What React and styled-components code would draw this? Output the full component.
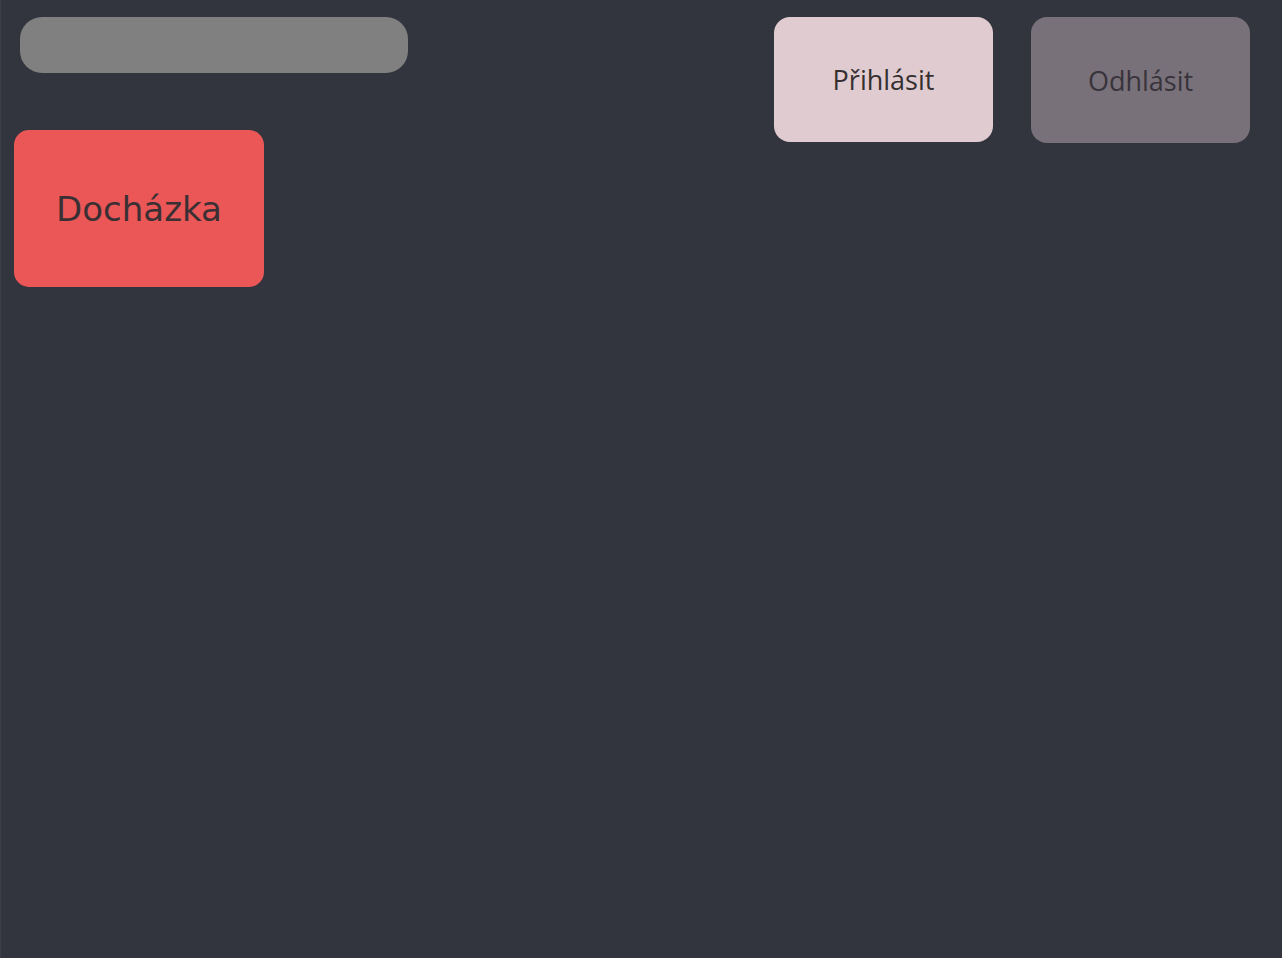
import styled, { createGlobalStyle } from 'styled-components';

const GlobalStyle = createGlobalStyle`
	html, body {
		margin: 0;
		padding: 0;
		background-color: #32343e;
	}

	#root {
		min-height: 100vh;
	}
`;

const App = () => {
	return (
		<>
			<GlobalStyle />
			<Page>
				<LeftColumn>
					<SearchBar />
					<TileButton>Docházka</TileButton>
				</LeftColumn>
				<Actions>
					<ActionButton $variant="login">Přihlásit</ActionButton>
					<ActionButton $variant="logout">Odhlásit</ActionButton>
				</Actions>
			</Page>
		</>
	);
};

export default App;

const Page = styled.div`
	box-sizing: border-box;
	height: 100vh;
	background-color: #32343e;
	border-left: 1px solid #3d3f48;
	display: flex;
	justify-content: space-between;
	align-items: flex-start;
	padding: 17px 32px 0 13px;
`;

const LeftColumn = styled.div`
	display: flex;
	flex-direction: column;
	align-items: flex-start;
	gap: 57px;
`;

const SearchBar = styled.div`
	width: 388px;
	height: 56px;
	margin-left: 6px;
	border-radius: 22px;
	background-color: #808080;
`;

const TileButton = styled.button`
	width: 250px;
	height: 157px;
	border: none;
	border-radius: 15px;
	background-color: #eb5757;
	color: #3a3034;
	font-family: "DejaVu Sans", Verdana, sans-serif;
	font-size: 34px;
	padding: 0;
	cursor: pointer;
`;

const Actions = styled.div`
	display: flex;
	gap: 38px;
`;

const ActionButton = styled.button`
	width: 219px;
	height: ${({ $variant }) => ($variant === 'logout' ? '126px' : '125px')};
	border: none;
	border-radius: 16px;
	padding: 0;
	background-color: ${({ $variant }) => ($variant === 'logout' ? '#797179' : '#e0cbd1')};
	color: ${({ $variant }) => ($variant === 'logout' ? '#38343c' : '#35302f')};
	font-family: "Open Sans", "Noto Sans", sans-serif;
	font-size: 27px;
	cursor: pointer;
`;
